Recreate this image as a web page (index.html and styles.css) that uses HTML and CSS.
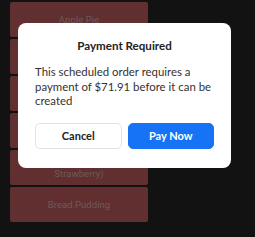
FILE: index.html
```html
<!DOCTYPE html>
<html lang="en">
<head>
  <meta charset="UTF-8">
  <meta name="viewport" content="width=device-width, initial-scale=1.0">
  <title>Desserts</title>
  <link rel="stylesheet" href="styles.css">
</head>
<body>
  <div class="menu">
    <div class="item">Apple Pie</div>
    <div class="item">Brownie</div>
    <div class="item">Cheesecake</div>
    <div class="item">Chocolate Cake</div>
    <div class="item">Sundae (Chocolate, Vanilla, Strawberry)</div>
    <div class="item">Bread Pudding</div>
  </div>

  <div class="overlay">
    <div class="modal">
      <h2 class="modal-title">Payment Required</h2>
      <p class="modal-text">This scheduled order requires a payment of $71.91 before it can be created</p>
      <div class="modal-actions">
        <button class="btn cancel">Cancel</button>
        <button class="btn pay">Pay Now</button>
      </div>
    </div>
  </div>
</body>
</html>
```

FILE: styles.css
```css
body {
  margin: 0;
  background: #121212;
  font-family: Roboto, "Liberation Sans", sans-serif;
  height: 237px;
  overflow: hidden;
}
.menu {
  display: flex;
  flex-direction: column;
  gap: 2px;
  width: 138px;
  padding: 2px 10px;
}
.item {
  height: 35px;
  box-sizing: border-box;
  padding: 0 4px;
  display: flex;
  align-items: center;
  justify-content: center;
  text-align: center;
  background: #612f30;
  color: #6e5a5a;
  font-size: 9.6px;
  line-height: 11.5px;
  border-radius: 2px;
}
.overlay {
  position: fixed;
  inset: 0;
}
.modal {
  position: absolute;
  left: 18px;
  top: 23px;
  width: 213px;
  box-sizing: border-box;
  padding: 15px 17px 19px;
  background: #fff;
  border-radius: 8px;
  font-family: Lato, "Open Sans", sans-serif;
}
.modal-title {
  margin: 0;
  text-align: center;
  font-size: 11.6px;
  line-height: 16px;
  font-weight: 700;
  color: #222;
}
.modal-text {
  margin: 11px 0 14px;
  font-size: 11.4px;
  line-height: 14.5px;
  color: #333;
}
.modal-actions {
  display: flex;
  gap: 6px;
}
.btn {
  flex: 1;
  height: 26px;
  border-radius: 5px;
  font-family: inherit;
  font-size: 11px;
  font-weight: 700;
  cursor: pointer;
}
.btn.cancel {
  background: #fff;
  border: 1px solid #e3e3e3;
  color: #222;
}
.btn.pay {
  background: #1673f5;
  border: 1px solid #1673f5;
  color: #fff;
}
```
